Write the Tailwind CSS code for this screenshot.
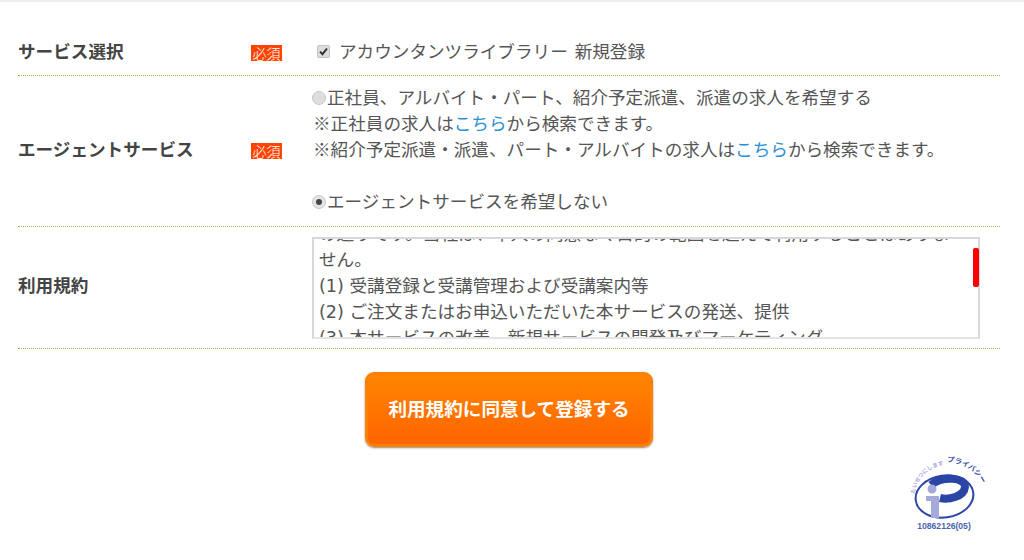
<!DOCTYPE html>
<html lang="ja">
<head>
    <meta charset="UTF-8">
    <title>利用規約</title>
    <script src="https://cdn.jsdelivr.net/npm/@tailwindcss/browser@4"></script>
</head>
<body class="bg-white h-[560px] overflow-hidden font-['Noto_Sans_CJK_JP','Liberation_Sans',sans-serif] text-[#555]">
    <div class="h-[2px] bg-[#eeeeee]"></div>
    <div class="pl-[18px] pr-6">
        <!-- サービス選択 -->
        <div class="flex items-center h-[74px] pt-[26px] border-b border-dotted border-[#b0ad55]">
            <div class="w-[233px] text-[17.6px] font-bold text-[#444]">サービス選択</div>
            <span class="w-[31px] h-[16px] mt-[2px] flex items-center justify-center bg-[#ff4400] text-white text-[14px] leading-none font-light">必須</span>
            <div class="flex items-center ml-[35px]">
                <span class="w-[13px] h-[13px] rounded-[2px] bg-[#dddddd] border border-[#c4c4c4] flex items-center justify-center">
                    <svg width="9" height="9" viewBox="0 0 9 9"><path d="M1 4.6 L3.5 7.2 L8 1.5" fill="none" stroke="#333" stroke-width="2"/></svg>
                </span>
                <span class="ml-[9px] -mt-px text-[17.6px] leading-[26px] [word-spacing:3px]">アカウンタンツライブラリー 新規登録</span>
            </div>
        </div>
        <!-- エージェントサービス -->
        <div class="flex items-center h-[151px] border-b border-dotted border-[#b0ad55]">
            <div class="w-[233px] -mt-[3px] text-[17.6px] font-bold text-[#444]">エージェントサービス</div>
            <span class="w-[31px] h-[16px] flex items-center justify-center bg-[#ff4400] text-white text-[14px] leading-none font-light">必須</span>
            <div class="ml-[31px] -mt-[5px] text-[17.6px] leading-[26px] whitespace-nowrap">
                <div class="flex items-center">
                    <span class="w-[14px] h-[14px] -ml-px rounded-full bg-[#dedede] border border-[#c8c8c8] mt-[3px] mr-px"></span>正社員、アルバイト・パート、紹介予定派遣、派遣の求人を希望する
                </div>
                <div>※正社員の求人は<a class="text-[#2b8fd6]">こちら</a>から検索できます。</div>
                <div>※紹介予定派遣・派遣、パート・アルバイトの求人は<a class="text-[#2b8fd6]">こちら</a>から検索できます。</div>
                <div class="h-[26px]"></div>
                <div class="flex items-center">
                    <span class="w-[14px] h-[14px] -ml-px rounded-full bg-[#e4e4e4] border border-[#c8c8c8] mt-[3px] mr-px flex items-center justify-center"><span class="w-[6px] h-[6px] rounded-full bg-[#444]"></span></span>エージェントサービスを希望しない
                </div>
            </div>
        </div>
        <!-- 利用規約 -->
        <div class="flex items-center h-[122px] border-b border-dotted border-[#b0ad55]">
            <div class="w-[294px] -mt-[5px] text-[17.6px] font-bold text-[#444]">利用規約</div>
            <div class="relative w-[668px] h-[102px]">
                <div class="h-full border-2 border-[#d8d8d8] border-b-[#e4e4e4] overflow-hidden">
                    <div class="-mt-[18px] pl-[5px] pr-[20px] font-['DejaVu_Sans','Noto_Sans_CJK_JP',sans-serif] text-[17.6px] leading-[26px]">
                        <div class="whitespace-nowrap">の通りです。当社は、本人の同意なく目的の範囲を超えて利用することはありま</div>
                        <div>せん。</div>
                        <div>(1) 受講登録と受講管理および受講案内等</div>
                        <div>(2) ご注文またはお申込いただいた本サービスの発送、提供</div>
                        <div class="whitespace-nowrap">(3) 本サービスの改善、新規サービスの開発及びマーケティング</div>
                    </div>
                </div>
                <div class="absolute right-px top-[11px] w-[6px] h-[39px] rounded-[2px] bg-[#ff0000]"></div>
            </div>
        </div>
        <!-- 登録ボタン -->
        <div class="flex justify-center pt-[23px]">
            <button class="w-[288px] h-[75px] pb-[4px] rounded-[9px] border-[3px] border-[#ff7f00] bg-linear-to-b from-[#ff8400] to-[#ff6400] text-white text-[18.6px] font-bold shadow-[0_1px_2px_rgba(60,60,60,0.6)]">利用規約に同意して登録する</button>
        </div>
        <!-- プライバシーマーク -->
        <div class="flex justify-end mt-[3px] pr-[10px]">
            <svg width="90" height="90" viewBox="0 0 90 90">
                <defs>
                    <path id="arc-left" d="M15 44 A 32 32 0 0 1 47 15"/>
                    <path id="arc-right" d="M47 12 A 40 34 0 0 1 83 36"/>
                </defs>
                <text class="font-bold" font-size="5.5" fill="#a5a9dc"><textPath href="#arc-left">たいせつにします</textPath></text>
                <text class="font-bold" font-size="7.2" fill="#2a45a5"><textPath href="#arc-right">プライバシー</textPath></text>
                <ellipse cx="44.5" cy="46.5" rx="29" ry="21" transform="rotate(-8 44.5 46.5)" fill="none" stroke="#2a45a5" stroke-width="2"/>
                <path d="M31 35 C42 26 66 27 65 37 C64 47 48 50 40 48" fill="none" stroke="#2a45a5" stroke-width="8"/>
                <circle cx="32" cy="39" r="4.5" fill="#a5a9dc"/>
                <path d="M26 46 H39 V68 H31 V51 H26 Z" fill="#a5a9dc"/>
                <text x="44" y="79" text-anchor="middle" class="font-bold" font-family="Liberation Sans" font-size="8.6" fill="#4a64ae">10862126(05)</text>
            </svg>
        </div>
    </div>
</body>
</html>
